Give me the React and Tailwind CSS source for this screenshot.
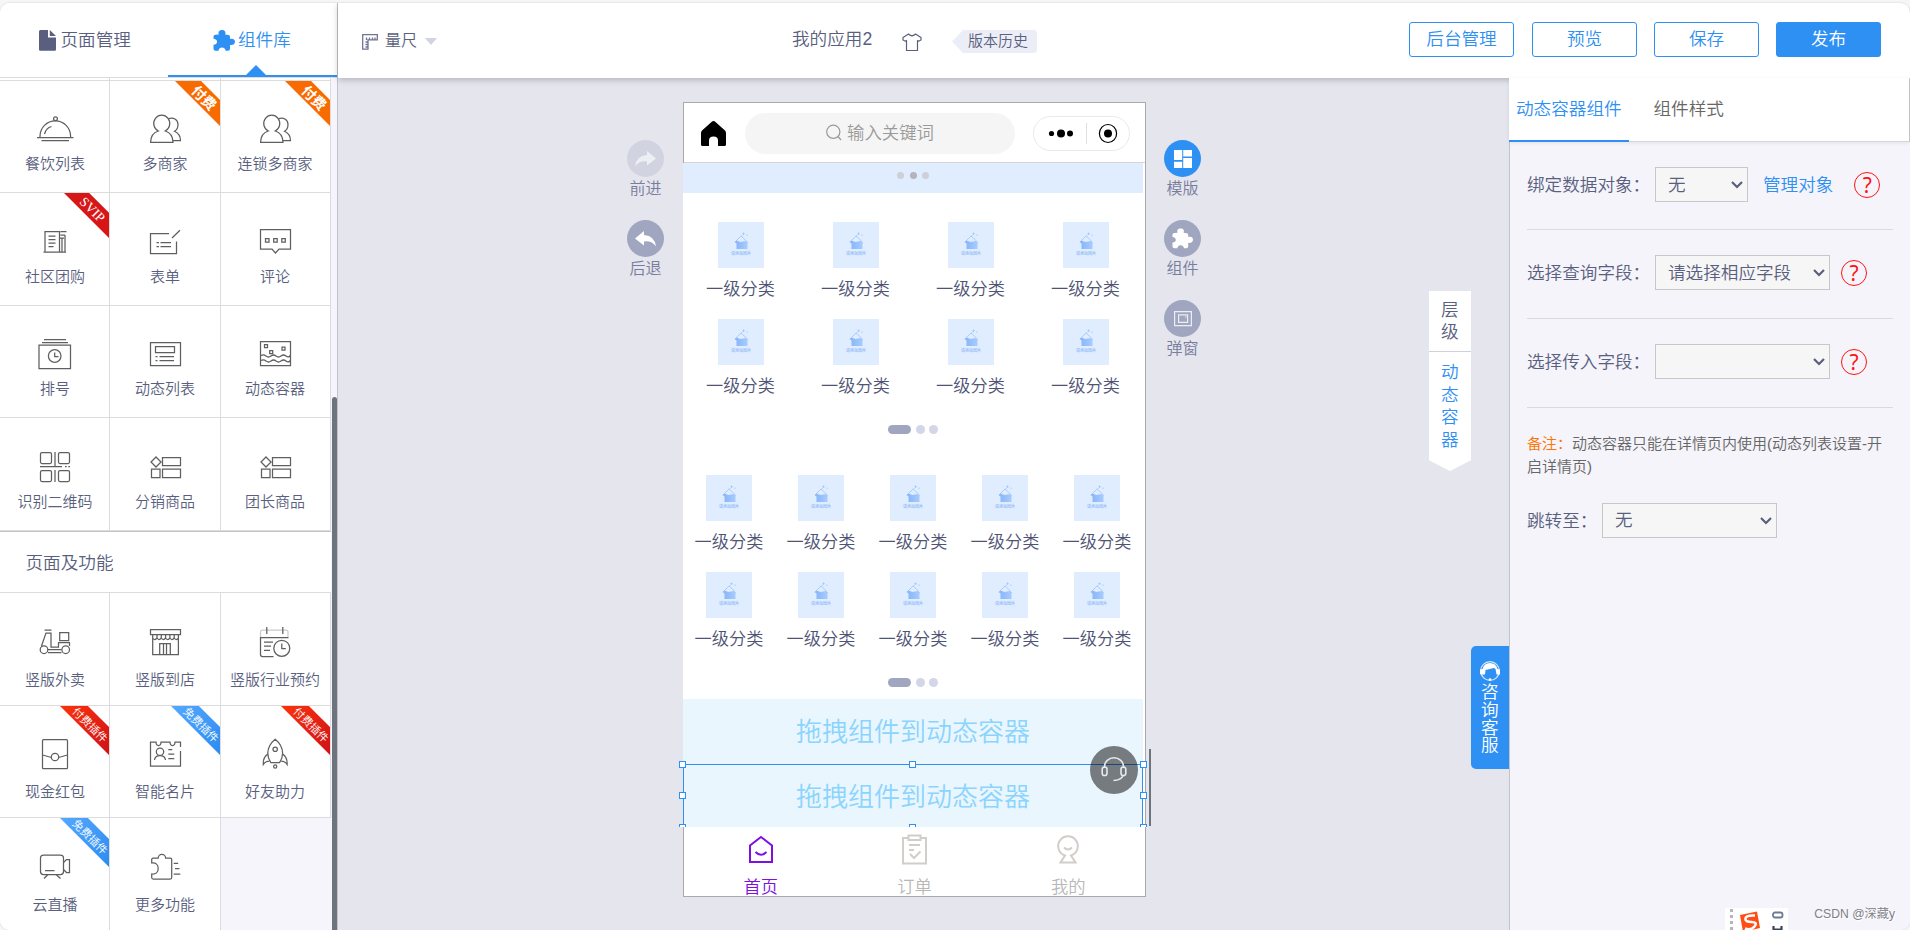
import React from 'react';

// ---------- sidebar icons, all on a 36px box ----------
const Line = ({ children, color = '#5f5f5f' }) => (
  <svg width="36" height="36" viewBox="0 0 36 36" fill="none" stroke={color} strokeWidth="1.250" className="shrink-0 overflow-visible">
    {children}
  </svg>
);

const Puzzle = ({ className }) => (
  <svg viewBox="0 0 22 21" fill="currentColor" className={className}>
    <path d="M5.800 4.500C4.800 1.500 6.500 0 9 0s4.200 1.500 3.200 4.500L15.500 5Q17 5.200 17 7V9C20 8 22 9.500 22 11.800S20 15.500 17 15V18.500Q17 20.700 15 20.700H12.700C12 18.500 11 17.500 9 17.500S6 18.500 5.500 20.700H2.500Q.5 20.700.5 18.700V14.800C3 14.500 4 13.500 4 11.800S2.500 9 .5 8.800V6.500Q.5 4.800 2.500 4.700z" />
  </svg>
);

const ProductIcon = () => (
  <Line>
    <path d="M9 8l5 5-5 5-5-5zM15.5 8.500h18v8h-18zM4.500 20h8.500v8.500H4.500zM15.500 20h18v8.500h-18z" />
  </Line>
);

const PeopleIcon = () => (
  <Line>
    <path d="M11.300 20A8 8.300 0 1 1 18.200 20Q26 22.500 26 31.300H3.600Q3.600 22.500 11.300 20z" />
    <path d="M21.500 7.600C27 6 31 9 31 13.500C31 16.500 29.800 19 27.500 20.300C31.300 22 33.500 25.500 33.500 29.700H26" />
  </Line>
);

const icons = {
  dish: (
    <Line>
      <path d="M0 26.500h36.500M4.500 29.700h27.500M3 26v-.8a15.300 15.300 0 0 1 30.600 0v.8M7.500 23q1.500-6 7-7.500" />
      <circle cx="18.500" cy="7.700" r="1.900" />
    </Line>
  ),
  people: <PeopleIcon />,
  community: (
    <Line>
      <path d="M8 28V7.500h14.500V28M6.500 28h22.500M11.500 12h7M11.500 15.500h7M11.500 19h7M11.500 22.500h5M23.500 7.500h6M23.500 11h4.500M25 14v14M28 11v17M23 14h4" />
    </Line>
  ),
  form: (
    <Line>
      <path d="M22 9.500H3.500v20h26V17.500M25 14l8-7.800M9.500 18.500h2.500M13.500 18.500h10.500M9.500 22.500h2.500M13.500 22.500h10.500" />
    </Line>
  ),
  comment: (
    <Line>
      <path d="M3.500 5.500h30v19.500h-11.500l-3.500 4-3.500-4H3.500zM8.500 14.500h3.500v3.500H8.500zM16.700 14.500h3.500v3.500h-3.500zM24.800 14.500h3.500v3.500h-3.500z" />
    </Line>
  ),
  queue: (
    <Line>
      <path d="M2 9h31.500v23.500H2zM5 6.500h26M7 3.700h22M17.700 16.500v4h3.800" />
      <circle cx="17.700" cy="20" r="6.300" />
    </Line>
  ),
  list: (
    <Line>
      <path d="M3.500 6.500h30v23h-30zM8.500 10.500h19v6h-19zM8.500 20.500h2M12.500 20.500h14.500M8.500 24.500h2M12.500 24.500h14.500" />
    </Line>
  ),
  container: (
    <Line>
      <path d="M3.500 5.500h30v24h-30zM7.500 8.500h3v3h-3zM12.700 14.500h3v3h-3zM25 11h3v3h-3z" />
      <path d="M4 19.500q2.500-1.500 5 .5t5 0 5 0 5 0 5 0 4.500-.5M4 24.500q2.500-1.500 5 .5t5 0 5 0 5 0 5 0 4.500-.5" />
    </Line>
  ),
  qr: (
    <Line>
      <rect x="3.500" y="3.500" width="11" height="11" rx="1.500" />
      <rect x="21.500" y="3.500" width="11" height="11" rx="1.500" />
      <rect x="3.500" y="21.500" width="11" height="11" rx="1.500" />
      <rect x="21.500" y="21.500" width="11" height="11" rx="1.500" />
      <path d="M18 3v14.700M3 17.700h22M28 17.700h1.700M31.300 17.700h1.700M18 21v12" />
    </Line>
  ),
  product: <ProductIcon />,
  scooter: (
    <Line>
      <circle cx="7" cy="25.700" r="3.800" />
      <circle cx="28.700" cy="25.700" r="3.800" />
      <path d="M7.500 6h7M4.500 22L9 9h5v14h7.500v-4.500h11v3.500M11 28.500h13.500M11 25.500h13.500M22.700 8.500h9v8h-9z" />
    </Line>
  ),
  store: (
    <Line>
      <path d="M3.500 5.500h30v5h-30zM5.700 10.500v20h25.700v-20M5.700 14q2 3 4.300 0 2 3 4.300 0 2 3 4.300 0 2 3 4.300 0 2 3 4.300 0 2 3 4.300 0M10 10.500v3.500M14.300 10.500v3.500M18.600 10.500v3.500M22.900 10.500v3.500M27.200 10.500v3.500M12.700 30.500v-11h10.600v11M16.500 20v10.500M19.500 20v10.500" />
    </Line>
  ),
  booking: (
    <Line>
      <path d="M3.500 13v-5q0-2 2-2h23.500q2 0 2 2v5" stroke="#ccc" />
      <path d="M9.800 3v7M25.800 3v7M3 13.500h28.500M3.500 13.500v17q0 2 2 2h11M7 18h9M7 22h7M7 26.300h6M24.800 19.500v5h4" />
      <circle cx="24.800" cy="24.300" r="8" />
    </Line>
  ),
  packet: (
    <Line>
      <rect x="5.500" y="3.700" width="25" height="29" rx="1" />
      <path d="M5.500 19l9 2.500M30.500 19l-9 2.500" />
      <circle cx="18" cy="21" r="3.700" />
    </Line>
  ),
  card: (
    <Line>
      <path d="M33.500 11V6h-5.500q0 3.500-2.500 3.500T23 6h-9q0 3.500-2.500 3.500T9 6H3.500v24h30V15M21.300 13.500h4M21.300 18h6M21.300 22.500h6M7.500 24q.5-4.500 5.500-4.500t5.500 4.500" />
      <circle cx="13" cy="15.700" r="3.700" />
    </Line>
  ),
  rocket: (
    <Line>
      <path d="M18.200 3.300q-7.400 6-7.400 14 0 5 3 9.400h8.800q3-4.400 3-9.400 0-8-7.400-14zM10.800 18q-5 3.500-4.500 10.500 2-3.500 6-3.500M25.600 18q5 3.500 4.500 10.500-2-3.500-6-3.500" />
      <circle cx="18.200" cy="13.200" r="2.200" />
      <circle cx="18.200" cy="30.500" r="1.600" />
    </Line>
  ),
  camera: (
    <Line>
      <rect x="3.500" y="6" width="23" height="19.500" rx="3" />
      <path d="M26.500 13.500l3-3h3v13h-3l-3-3M11 25.500l-4 4M19 25.500l4.500 4M8 21.500h9.500" />
    </Line>
  ),
  more: (
    <Line>
      <path d="M4.700 14v-3.500q0-1.500 1.500-1.500h5a3.700 3.700 0 0 1 7.400 0h4.600q1.500 0 1.500 1.500v18q0 1.500-1.500 1.500H6.200q-1.500 0-1.500-1.500V25q6.500.5 6.500-5.500T4.700 14zM26.700 14.300h4.500M28 19.700h4.500M26.700 25h6.600" />
    </Line>
  ),
};

// ---------- sidebar data ----------
const components = [
  { icon: 'dish', label: '餐饮列表' },
  { icon: 'people', label: '多商家', ribbon: 'paid' },
  { icon: 'people', label: '连锁多商家', ribbon: 'paid' },
  { icon: 'community', label: '社区团购', ribbon: 'svip' },
  { icon: 'form', label: '表单' },
  { icon: 'comment', label: '评论' },
  { icon: 'queue', label: '排号' },
  { icon: 'list', label: '动态列表' },
  { icon: 'container', label: '动态容器' },
  { icon: 'qr', label: '识别二维码' },
  { icon: 'product', label: '分销商品' },
  { icon: 'product', label: '团长商品' },
];

const features = [
  { icon: 'scooter', label: '竖版外卖' },
  { icon: 'store', label: '竖版到店' },
  { icon: 'booking', label: '竖版行业预约' },
  { icon: 'packet', label: '现金红包', ribbon: 'paidPlugin' },
  { icon: 'card', label: '智能名片', ribbon: 'freePlugin' },
  { icon: 'rocket', label: '好友助力', ribbon: 'paidPlugin' },
  { icon: 'camera', label: '云直播', ribbon: 'freePlugin' },
  { icon: 'more', label: '更多功能' },
];

const ribbons = {
  paid: {
    text: '付费',
    box: 'h-[45px] w-[45px] bg-[#f76b00] [clip-path:polygon(0_0,58%_0,100%_42%,100%_100%)]',
    font: 'left-[14px] top-[7px] w-[30px] text-[14px] font-bold',
  },
  svip: {
    text: 'SVIP',
    box: 'h-[45px] w-[45px] bg-[#d71618] [clip-path:polygon(0_0,56%_0,100%_44%,100%_100%)]',
    font: "left-[8px] top-[7px] w-[40px] text-[13.5px] font-['Liberation_Serif',serif]",
  },
  paidPlugin: {
    text: '付费插件',
    box: 'h-[49px] w-[49px] bg-linear-to-br from-[#fb3208] to-[#d01018] [clip-path:polygon(0_0,57%_0,100%_43%,100%_100%)]',
    font: 'left-[5px] top-[9px] w-[50px] text-[11px]',
  },
  freePlugin: {
    text: '免费插件',
    box: 'h-[49px] w-[49px] bg-linear-to-br from-[#54a8ff] to-[#2a8cf0] [clip-path:polygon(0_0,57%_0,100%_43%,100%_100%)]',
    font: 'left-[5px] top-[9px] w-[50px] text-[11px]',
  },
};

const Ribbon = ({ type }) => {
  const r = ribbons[type];
  return (
    <div className={`absolute right-0 top-0 ${r.box}`}>
      <span className={`absolute rotate-45 text-center leading-[20px] whitespace-nowrap text-white ${r.font}`}>{r.text}</span>
    </div>
  );
};

const shifts = ['pl-px', '', 'pr-px'];

const Tile = ({ item, col, pad, gap }) => (
  <div className={`relative flex flex-col items-center border-r border-b border-[#dcdcdc] bg-white ${pad} ${shifts[col]}`}>
    {icons[item.icon]}
    <span className={`text-[15px] leading-[20px] text-[#5a5f80] whitespace-nowrap ${gap}`}>{item.label}</span>
    {item.ribbon && <Ribbon type={item.ribbon} />}
  </div>
);

const Sidebar = () => (
  <aside className="flex w-[338px] shrink-0 flex-col border-r border-[#c2c2c8] bg-[#f5f5fb]">
    <div className="flex h-[75px] shrink-0 border-b border-[#dcdcdc] bg-white text-[17.6px]">
      <div className="flex w-[168px] items-center pl-[39px] text-[#5a5f80]">
        <svg width="17" height="21" viewBox="0 0 17 21" className="mr-[4.500px]" fill="#5a5f80">
          <path d="M1.500 0H9v7.500h8V19.500q0 1.200-1.200 1.200H1.200Q0 20.700 0 19.500V1.500Q0 0 1.500 0zM10.800 0L17 6h-6.200z" />
        </svg>
        页面管理
      </div>
      <div className="relative flex flex-1 items-center border-b-2 border-[#2f90f3] pt-[2px] pl-[45px] text-[#2f90f3]">
        <Puzzle className="mr-[3px] h-[21px] w-[22px]" />
        组件库
        <svg width="20" height="10" viewBox="0 0 20 10" fill="#2f90f3" className="absolute bottom-0 left-[78px]">
          <path d="M10 0l10 10H0z" />
        </svg>
      </div>
    </div>
    <div className="flex min-h-0 flex-1">
      <div className="w-[331px] overflow-hidden">
        <div className="grid h-[3px] grid-cols-[110px_111px_110px]">
          <div className="border-r border-b border-[#dcdcdc] bg-white" />
          <div className="border-r border-b border-[#dcdcdc] bg-white" />
          <div className="border-r border-b border-[#dcdcdc] bg-white" />
        </div>
        <div className="grid grid-cols-[110px_111px_110px] grid-rows-[112px_113px_112px_113px]">
          {components.map((item, i) => (
            <Tile key={i} item={item} col={i % 3} pad={Math.floor(i / 3) % 2 ? 'pt-[31px]' : 'pt-[30px]'} gap="mt-[7px]" />
          ))}
        </div>
        <div className="flex h-[62px] items-center border-t border-b border-t-[#c4c4c4] border-b-[#dcdcdc] bg-white pt-[2px] pl-[25.500px] text-[17.6px] text-[#5a5f80]">
          页面及功能
        </div>
        <div className="grid grid-cols-[110px_111px_110px] grid-rows-[113px_112px_113px]">
          {features.map((item, i) => (
            <Tile key={i} item={item} col={i % 3} pad={Math.floor(i / 3) % 2 ? 'pt-[30px]' : 'pt-[31px]'} gap="mt-[10px]" />
          ))}
        </div>
      </div>
      <div className="flex-1 pl-[1px] pt-[319px]">
        <div className="h-full rounded-t-[3px] bg-[#6c757d]" />
      </div>
    </div>
  </aside>
);

// ---------- top bar ----------
const TopBar = () => (
  <header className="relative z-10 flex h-[75px] shrink-0 items-start bg-white text-[#5a5f80] shadow-[0_2px_6px_rgba(0,0,0,0.22)]">
    <div className="flex w-[454px] items-center pt-[26px] pl-[24px]">
      <svg width="16" height="16" viewBox="0 0 16 16" fill="none" stroke="#6f7492" strokeWidth="1.300" className="mt-[1px]">
        <path d="M.7.700h14.600v5.200H6v9.300H.7zM4.500 6V3.500M7.500 6V3.500M10.500 6V3.500M13 6V3.500M6 8H3.500M6 10.500H3.500M6 13H3.500" />
      </svg>
      <span className="ml-[7px] text-[16px] leading-[24px]">量尺</span>
      <svg width="12" height="7" viewBox="0 0 12 7" fill="#d2d4e2" className="ml-[8px]">
        <path d="M0 0h12L6 7z" />
      </svg>
    </div>
    <div className="flex flex-1 items-start pt-[23px]">
      <span className="w-[110px] text-[17.6px] leading-[26px] whitespace-nowrap">我的应用2</span>
      <svg width="20" height="19" viewBox="0 0 20 19" fill="none" stroke="#5a5f80" strokeWidth="1.200" className="mt-[7px]">
        <path d="M6.500 1L1 4.500V7l2.500 1.200L4.500 7.500v10h11v-10l1 .7L19 7V4.500L13.500 1Q10 4.500 6.500 1z" strokeLinejoin="round" />
      </svg>
      <div className="mt-[4px] ml-[30px] h-[23px] w-[85px] rounded-r-[3px] bg-[#eceef7] pl-[16px] text-[15px] leading-[21px] whitespace-nowrap [clip-path:polygon(0_50%,13%_0,100%_0,100%_100%,13%_100%)]">
        版本历史
      </div>
    </div>
    <div className="flex gap-[17px] pt-[19px] pr-[29px] text-[17.6px] text-[#2f90f3]">
      <button className="mr-[1px] h-[35px] w-[105px] rounded-[3px] border border-[#2f90f3]">后台管理</button>
      <button className="h-[35px] w-[105px] rounded-[3px] border border-[#2f90f3]">预览</button>
      <button className="h-[35px] w-[105px] rounded-[3px] border border-[#2f90f3]">保存</button>
      <button className="h-[35px] w-[105px] rounded-[3px] border border-[#2f90f3] bg-[#2f90f3] text-white">发布</button>
    </div>
  </header>
);

// ---------- canvas ----------
const Tool = ({ label, color, children }) => (
  <div className="flex h-[80px] flex-col items-center">
    <div className={`flex h-[37px] w-[37px] items-center justify-center rounded-full ${color}`}>{children}</div>
    <span className="text-[16px] leading-[24px] whitespace-nowrap text-[#787d9b]">{label}</span>
  </div>
);

const Placeholder = () => (
  <svg width="46" height="46" viewBox="0 0 46 46" className="bg-[#e0edff]">
    <defs>
      <linearGradient id="basket" x1="0" y1="0" x2="1" y2="0">
        <stop offset="0" stopColor="#85b4f8" />
        <stop offset="1" stopColor="#a9cdff" />
      </linearGradient>
    </defs>
    <path d="M17.500 19.500l5.500-5.500 6 5.500" fill="none" stroke="#a5c8fa" strokeWidth=".9" />
    <path d="M16.500 20l2-1.500 4 1.500 5-1 2 1 .8.800-.8.700v5.500h-11v-5.500z" fill="url(#basket)" />
    <path d="M25.500 10.500v2.500M24.300 11.700h2.500M29 12.500v1.500M23.300 13.500h1" stroke="#9cc3fb" strokeWidth=".8" />
    <text x="23" y="32.700" textAnchor="middle" fontSize="4" fontWeight="500" fill="#8ab6f7">请添加图片</text>
  </svg>
);

const Category = () => (
  <div className="flex h-[97px] flex-col items-center">
    <Placeholder />
    <span className="mt-[9px] text-[17.200px] leading-[24px] whitespace-nowrap text-[#4f5474]">一级分类</span>
  </div>
);

const CategoryBlock = ({ count, cols }) => (
  <div className="h-[253px] pt-[29px]">
    <div className={`grid ${cols}`}>
      {Array.from({ length: count }, (_, i) => (
        <Category key={i} />
      ))}
    </div>
    <div className="mt-[9px] flex pl-[205px]">
      <i className="h-[9px] w-[23px] rounded-full bg-[#a0a6bf]" />
      <i className="ml-[5px] h-[9px] w-[9px] rounded-full bg-[#d3d6e6]" />
      <i className="ml-[4px] h-[9px] w-[9px] rounded-full bg-[#d3d6e6]" />
    </div>
  </div>
);

const Handle = ({ pos }) => <i className={`absolute h-[7px] w-[7px] border border-[#2f90f3] bg-white ${pos}`} />;

const Phone = () => (
  <div className="mt-[24px] ml-[19px] h-[795px] w-[463px] border border-[#a9a9a9] bg-white">
    <div className="flex h-[60px] w-[461px] items-start border-b border-[#d5d5d5] pl-[17px]">
      <svg width="25" height="25" viewBox="0 0 25 25" className="mt-[18px]">
        <path d="M12.500 0q1 0 2 1L24 9.500q1 1 1 2.500v11.500q0 1.500-1.500 1.500H17v-5.500q0-4-4.500-4T8 19.500V25H1.500Q0 25 0 23.500V12q0-1.500 1-2.500L10.500 1q1-1 2-1z" />
      </svg>
      <div className="mt-[10px] ml-[19px] flex h-[41px] w-[270px] items-center rounded-full bg-[#f5f5f5] pl-[81px] text-[17.400px] text-[#9a9a9a]">
        <svg width="16" height="17" viewBox="0 0 16 17" fill="none" stroke="#9a9a9a" strokeWidth="1.200" className="mr-[5px] mb-[3px]">
          <circle cx="7.300" cy="7.800" r="6.600" />
          <path d="M12 12.500l3 3.500" />
        </svg>
        输入关键词
      </div>
      <svg width="97" height="35" viewBox="0 0 97 35" className="mt-[13px] ml-[18px]">
        <rect x=".5" y=".5" width="96" height="34" rx="17" fill="none" stroke="#e9e9e9" />
        <path d="M53.500 7v21" stroke="#e0e0e0" />
        <circle cx="18.500" cy="17.500" r="2.600" />
        <circle cx="28" cy="17.500" r="4" />
        <circle cx="37" cy="17.500" r="3" />
        <ellipse cx="75" cy="17.500" rx="8.600" ry="9" fill="none" stroke="#000" strokeWidth="1.200" />
        <circle cx="75" cy="17.500" r="4" />
      </svg>
    </div>
    <div className="-ml-px w-[460px] bg-white">
      <div className="flex h-[30px] gap-[5.500px] bg-[#e0edff] pt-[9px] pl-[214px]">
        <i className="h-[7px] w-[7px] rounded-full bg-[#cfcfd6]" />
        <i className="h-[7px] w-[7px] rounded-full bg-[#b3b4bd]" />
        <i className="h-[7px] w-[7px] rounded-full bg-[#cfcfd6]" />
      </div>
      <CategoryBlock count={8} cols="grid-cols-4" />
      <CategoryBlock count={10} cols="grid-cols-5" />
      <div className="relative h-[128px] overflow-y-clip bg-[#eaf6fe] text-center text-[26px] text-[#8bd4fe]">
        <div className="h-[65px] leading-[66px]">拖拽组件到动态容器</div>
        <div className="h-[63px] leading-[66px]">拖拽组件到动态容器</div>
        <div className="absolute top-[65px] left-0 h-[64px] w-[460px] border border-[#2f90f3]">
          <Handle pos="-left-[5px] -top-[4px]" />
          <Handle pos="left-[225px] -top-[4px]" />
          <Handle pos="left-[456px] -top-[4px]" />
          <Handle pos="-left-[5px] top-[27px]" />
          <Handle pos="left-[456px] top-[27px]" />
          <Handle pos="-left-[5px] top-[59px]" />
          <Handle pos="left-[225px] top-[59px]" />
          <Handle pos="left-[456px] top-[59px]" />
        </div>
        <div className="absolute top-[47px] left-[407px] flex h-[48px] w-[48px] items-center justify-center rounded-full bg-black/50">
          <svg width="26" height="26" viewBox="0 0 26 26" fill="none" stroke="#e8eaec" strokeWidth="1.600">
            <path d="M3.500 11V9.500a9.300 8.500 0 0 1 19 0V11M22 19q-2 4-9.500 4.500" />
            <rect x="1.200" y="10" width="4.800" height="8.500" rx="2.300" />
            <rect x="20" y="10" width="4.800" height="8.500" rx="2.300" />
          </svg>
        </div>
        <div className="absolute top-[50px] left-[466px] h-[77px] w-[2px] bg-[#6c757d]" />
      </div>
    </div>
    <nav className="grid h-[69px] w-[461px] grid-cols-3 text-[17.300px] text-[#b8b8b8]">
      <div className="flex flex-col items-center text-[#8010e0]">
        <svg width="32" height="36" viewBox="0 0 32 36" fill="none" stroke="#8010e0" strokeWidth="2" className="mt-[5px] shrink-0">
          <path d="M16 5L27 13.500V30H5V13.500zM10.500 20q5.500 5.500 11 0" />
        </svg>
        <span className="mt-[7px] leading-[24px]">首页</span>
      </div>
      <div className="flex flex-col items-center">
        <svg width="32" height="36" viewBox="0 0 32 36" fill="none" stroke="#d2cdca" strokeWidth="2" className="mt-[5px] shrink-0">
          <path d="M10 6H5v25.500h23V6h-5M10.500 3.500h12v4.500h-12zM11 13h11M11 18h5M12 22l4 4 6.500-6.500" />
        </svg>
        <span className="mt-[7px] leading-[24px]">订单</span>
      </div>
      <div className="flex flex-col items-center">
        <svg width="32" height="36" viewBox="0 0 32 36" fill="none" stroke="#d2cdca" strokeWidth="2" className="mt-[5px] shrink-0">
          <path d="M13 23.500a9.800 9.800 0 1 1 6 0l4.500 7H8.500zM12 15.500q4 4 8 0" />
        </svg>
        <span className="mt-[7px] leading-[24px]">我的</span>
      </div>
    </nav>
  </div>
);

const Canvas = () => (
  <main className="flex w-[1171px] shrink-0 items-start bg-[#e5e5ee]">
    <div className="ml-[289px] w-[37px] pt-[62px]">
      <Tool label="前进" color="bg-[#d1d3e0]">
        <svg width="21" height="16" viewBox="0 0 21 16" fill="#eeeff5">
          <path d="M12 0l9 7.500-9 7v-4Q4 9.500 0 15.500 1 5 12 4z" />
        </svg>
      </Tool>
      <Tool label="后退" color="bg-[#a0a6bf]">
        <svg width="21" height="16" viewBox="0 0 21 16" fill="#fff">
          <path d="M9 0L0 7.500l9 7v-4q8-1 12 5Q20 5 9 4z" />
        </svg>
      </Tool>
    </div>
    <Phone />
    <div className="ml-[18px] w-[37px] pt-[62px]">
      <Tool label="模版" color="bg-[#2f90f3]">
        <svg width="18" height="18" viewBox="0 0 18 18" fill="#fff">
          <path d="M0 0h8.200v10H0zM0 11.700h8.200V18H0zM9.200 0H18v6.500H9.200zM9.200 8H18v10H9.200z" />
        </svg>
      </Tool>
      <Tool label="组件" color="bg-[#a0a6bf]">
        <Puzzle className="h-[21px] w-[21px] text-white" />
      </Tool>
      <Tool label="弹窗" color="bg-[#a0a6bf]">
        <svg width="18" height="16" viewBox="0 0 18 16" fill="none" stroke="#eceef4" strokeWidth="1.200">
          <path d="M.6.600h16.800v14H.6zM4.600 3.800h9v7.500h-9zM11 6h1.500" />
        </svg>
      </Tool>
    </div>
    <div className="mt-[213px] ml-auto flex h-[180px] w-[42px] flex-col items-center bg-white text-[17.600px] text-[#5a5f80] [clip-path:polygon(0_0,100%_0,100%_94%,50%_100%,0_94%)]">
      <div className="h-[61px] w-full border-b border-[#d0d1da] px-[12px] pt-[9px] leading-[21.500px]">层级</div>
      <div className="px-[12px] pt-[9px] leading-[22.600px] text-[#2f90f3]">动态容器</div>
    </div>
    <div className="mt-[568px] flex h-[123px] w-[38px] flex-col items-center rounded-l-[5px] bg-[#2f90f3] px-[10px] pt-[15px] text-[17.600px] leading-[17.800px] text-white">
      <svg width="20" height="20" viewBox="0 0 20 20" className="shrink-0">
        <circle cx="10" cy="10" r="9.300" fill="none" stroke="#fff" strokeWidth="1.200" opacity=".8" />
        <path d="M2.500 8Q4 2 10 2t7.500 6l2.500.5v5h-3.500l-1-5.500-1.500-1-8.500 2-.5 4.500Q1 13.500 0 13V8.500z" fill="#fff" />
        <circle cx="10" cy="18.500" r="1.300" fill="#fff" />
      </svg>
      <span className="mt-[3px] w-[18px]">咨询客服</span>
    </div>
  </main>
);

// ---------- settings panel ----------
const Select = ({ value, width }) => (
  <div className={`flex h-[35px] shrink-0 items-center justify-between border border-[#c8c8c8] bg-[#f6f6f6] pr-[4px] pl-[12px] ${width}`}>
    <span>{value}</span>
    <svg width="12" height="8" viewBox="0 0 12 8" fill="none" stroke="#5a5f80" strokeWidth="2.200">
      <path d="M1 1l5 5 5-5" />
    </svg>
  </div>
);

const Help = ({ gap }) => (
  <span className={`mt-[1px] flex h-[26px] w-[26px] items-center justify-center rounded-full border-[1.500px] border-[#ff1414] font-['Noto_Sans'] text-[21px] leading-none font-normal text-[#ff1414] ${gap}`}>
    ?
  </span>
);

const Settings = () => (
  <section className="relative z-20 flex w-[401px] flex-col bg-[#f4f4fa] text-[17.600px] text-[#5a5f80]">
    <div className="flex h-[64px] shrink-0 border-r border-b border-r-[#c2c2c8] border-b-[#d6d6da] bg-white shadow-[0_1px_4px_rgba(0,0,0,0.08)]">
      <div className="-mb-px w-[120px] border-b-2 border-[#2f90f3] pl-[7px] leading-[63px] whitespace-nowrap text-[#2f90f3]">动态容器组件</div>
      <div className="pl-[24.500px] leading-[63px] text-[#666]">组件样式</div>
    </div>
    <div className="flex-1 border-l border-[#c2c2cc] pr-[17px] pl-[17px]">
      <div className="flex h-[88px] items-start border-b border-[#dadae4] pt-[25px] leading-[36px]">
        <span className="w-[128px] shrink-0 whitespace-nowrap">绑定数据对象：</span>
        <Select value="无" width="w-[93px]" />
        <span className="ml-[15px] whitespace-nowrap text-[#2f90f3]">管理对象</span>
        <div className="flex h-[35px] items-center">
          <Help gap="ml-[21px]" />
        </div>
      </div>
      <div className="flex h-[89px] items-start border-b border-[#dadae4] pt-[25px] leading-[36px]">
        <span className="w-[128px] shrink-0 whitespace-nowrap">选择查询字段：</span>
        <Select value="请选择相应字段" width="w-[175px]" />
        <div className="flex h-[35px] items-center">
          <Help gap="ml-[11px]" />
        </div>
      </div>
      <div className="flex h-[89px] items-start border-b border-[#dadae4] pt-[25px] leading-[36px]">
        <span className="w-[128px] shrink-0 whitespace-nowrap">选择传入字段：</span>
        <Select value="" width="w-[175px]" />
        <div className="flex h-[35px] items-center">
          <Help gap="ml-[11px]" />
        </div>
      </div>
      <p className="pt-[25px] text-[15px] leading-[22.500px] text-[#666]">
        <span className="text-[#ff7300]">备注：</span>
        动态容器只能在详情页内使用(动态列表设置-开启详情页)
      </p>
      <div className="mt-[25px] flex items-center">
        <span className="w-[75px] pt-[1px] whitespace-nowrap">跳转至：</span>
        <Select value="无" width="w-[175px]" />
      </div>
    </div>
    {/* input method bar, cut off by the window edge */}
    <div className="absolute bottom-0 left-[216px] flex h-[22px] w-[63px] overflow-hidden bg-white pl-[5px]">
      <div className="mt-[1px] h-[21px] border-l-[3px] border-dotted border-[#b5b5b5]" />
      <svg width="20" height="22" viewBox="0 0 20 22" className="ml-[7px]">
        <path d="M0 7l17-3.500L20 20l-17 4z" fill="#ff4e14" />
        <path d="M15 7.500q-9-.5-9.500 3t6 3.500 3 4.500-9.500 2" fill="none" stroke="#fff" strokeWidth="2.600" />
      </svg>
      <svg width="12" height="22" viewBox="0 0 12 22" fill="none" stroke="#6d7a90" strokeWidth="1.800" className="ml-[12px]">
        <rect x="1" y="4.500" width="9.500" height="5" rx="2" />
        <path d="M1.500 18v4M9.500 18v4M1.500 21.500h8" stroke="#3a4658" strokeWidth="2.200" />
      </svg>
    </div>
    <span className="absolute right-[15px] bottom-[6px] text-[12.200px] leading-[20px] whitespace-nowrap text-[#808086] [text-shadow:1px_1px_0_#fff]">
      CSDN @深藏y
    </span>
  </section>
);

export default function App() {
  return (
    <div className="h-[930px] w-[1910px] overflow-hidden bg-[#f6f6f6] pt-[3px] font-['Liberation_Sans','Noto_Sans_CJK_SC',sans-serif] font-[350]">
      <div className="flex h-[927px] overflow-hidden rounded-[10px] bg-white shadow-[0_0_2px_rgba(0,0,0,0.2)]">
        <Sidebar />
        <div className="flex flex-1 flex-col">
          <TopBar />
          <div className="flex min-h-0 flex-1">
            <Canvas />
            <Settings />
          </div>
        </div>
      </div>
    </div>
  );
}
